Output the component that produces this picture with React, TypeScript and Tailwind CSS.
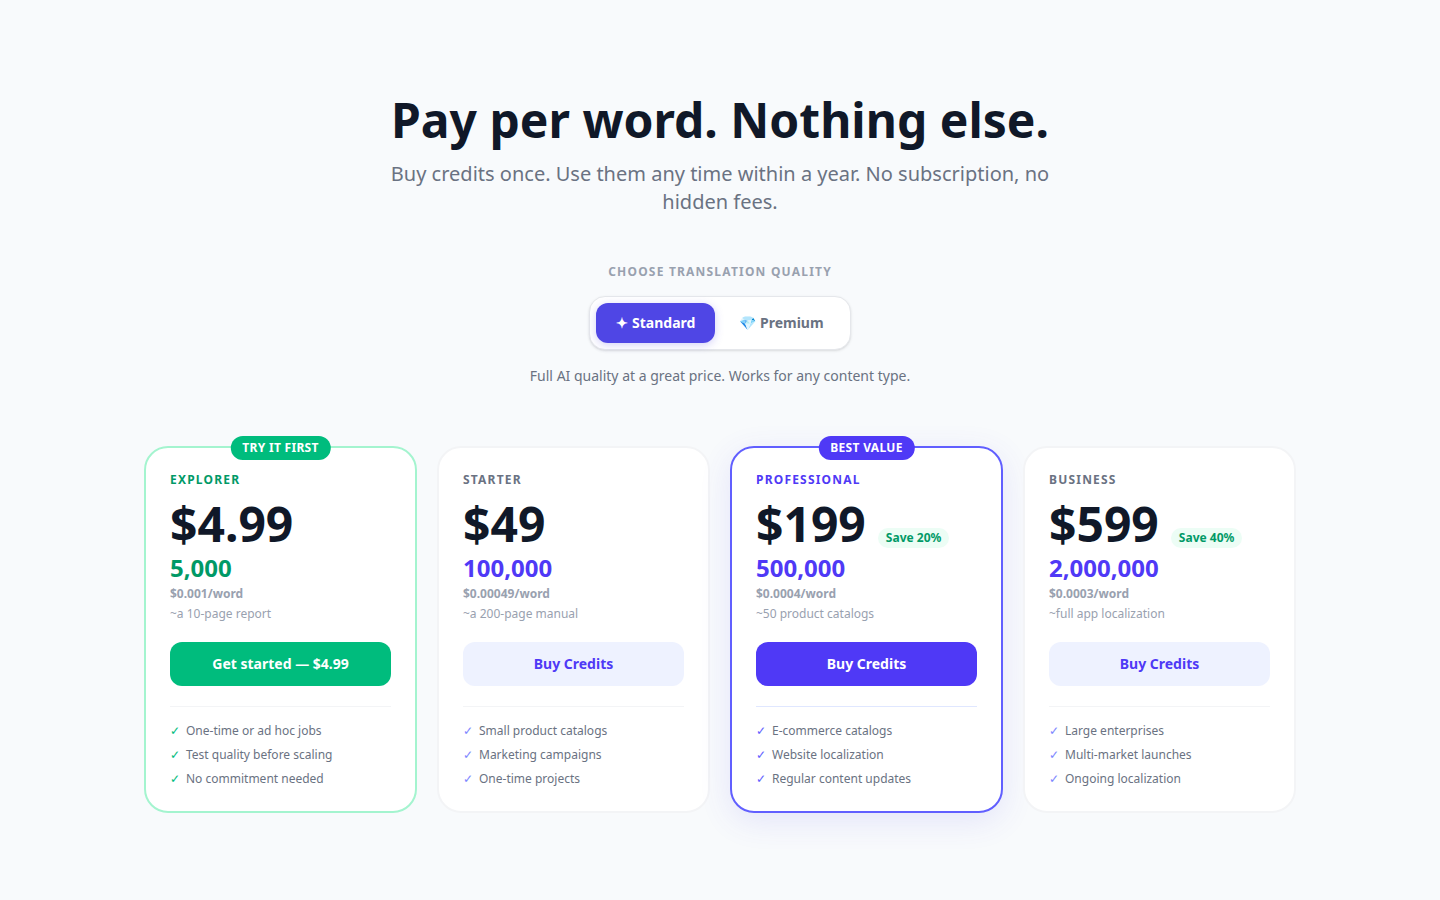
import { useState } from 'react';
import clsx from 'clsx';

type Quality = 'standard' | 'premium';

interface Plan {
  name: string;
  price: string;
  words: string;
  perWord: string;
  example: string;
  cta: string;
  features: string[];
  badge?: string;
  save?: string;
  theme: keyof typeof themes;
}

const themes = {
  green: {
    card: 'border-emerald-200',
    badge: 'bg-emerald-500',
    name: 'text-emerald-600',
    words: 'text-emerald-600',
    button: 'bg-emerald-500 text-white hover:bg-emerald-600',
    divider: 'border-gray-100',
    check: 'text-emerald-500',
  },
  plain: {
    card: 'border-gray-100',
    badge: 'bg-gray-500',
    name: 'text-gray-500',
    words: 'text-indigo-600',
    button: 'bg-indigo-50 text-indigo-600 hover:bg-indigo-100',
    divider: 'border-gray-100',
    check: 'text-indigo-400',
  },
  featured: {
    card: 'border-indigo-500 shadow-[0_8px_32px_rgba(79,70,229,0.12)]',
    badge: 'bg-indigo-600',
    name: 'text-indigo-600',
    words: 'text-indigo-600',
    button: 'bg-indigo-600 text-white hover:bg-indigo-700',
    divider: 'border-indigo-100',
    check: 'text-indigo-500',
  },
};

const plans: Plan[] = [
  {
    name: 'Explorer',
    price: '$4.99',
    words: '5,000',
    perWord: '$0.001/word',
    example: '~a 10-page report',
    cta: 'Get started — $4.99',
    features: ['One-time or ad hoc jobs', 'Test quality before scaling', 'No commitment needed'],
    badge: 'Try it first',
    theme: 'green',
  },
  {
    name: 'Starter',
    price: '$49',
    words: '100,000',
    perWord: '$0.00049/word',
    example: '~a 200-page manual',
    cta: 'Buy Credits',
    features: ['Small product catalogs', 'Marketing campaigns', 'One-time projects'],
    theme: 'plain',
  },
  {
    name: 'Professional',
    price: '$199',
    words: '500,000',
    perWord: '$0.0004/word',
    example: '~50 product catalogs',
    cta: 'Buy Credits',
    features: ['E-commerce catalogs', 'Website localization', 'Regular content updates'],
    badge: 'Best value',
    save: 'Save 20%',
    theme: 'featured',
  },
  {
    name: 'Business',
    price: '$599',
    words: '2,000,000',
    perWord: '$0.0003/word',
    example: '~full app localization',
    cta: 'Buy Credits',
    features: ['Large enterprises', 'Multi-market launches', 'Ongoing localization'],
    save: 'Save 40%',
    theme: 'plain',
  },
];

const qualities: { id: Quality; label: string }[] = [
  { id: 'standard', label: '✦ Standard' },
  { id: 'premium', label: '💎 Premium' },
];

function PlanCard({ plan }: { plan: Plan }) {
  const theme = themes[plan.theme];

  return (
    <article className={clsx('relative flex flex-col rounded-3xl border-2 bg-white p-6', theme.card)}>
      {plan.badge && (
        <span
          className={clsx(
            'absolute -top-3 left-1/2 -translate-x-1/2 rounded-full px-3 py-1 text-xs font-bold tracking-wide whitespace-nowrap text-white uppercase',
            theme.badge,
          )}
        >
          {plan.badge}
        </span>
      )}
      <h2 className={clsx('mb-3 text-xs font-bold tracking-widest uppercase', theme.name)}>{plan.name}</h2>
      <div className="mb-1 flex items-end gap-3">
        <span className="text-5xl leading-none font-bold text-gray-900">{plan.price}</span>
        {plan.save && (
          <span className="rounded-full bg-emerald-50 px-2 py-0.5 text-xs font-bold text-emerald-600">
            {plan.save}
          </span>
        )}
      </div>
      <p className={clsx('text-2xl font-bold', theme.words)}>{plan.words}</p>
      <p className="mt-0.5 text-xs font-bold text-gray-400">{plan.perWord}</p>
      <p className="mt-1 mb-5 text-xs text-gray-400">{plan.example}</p>
      <button
        type="button"
        className={clsx('w-full cursor-pointer rounded-xl py-3 text-sm font-bold', theme.button)}
      >
        {plan.cta}
      </button>
      <ul className={clsx('mt-5 flex flex-col gap-2 border-t pt-4 text-xs text-gray-500', theme.divider)}>
        {plan.features.map((feature) => (
          <li key={feature} className="flex gap-1.5">
            <span className={theme.check}>✓</span>
            {feature}
          </li>
        ))}
      </ul>
    </article>
  );
}

export default function App() {
  const [quality, setQuality] = useState<Quality>('standard');

  return (
    <main className="min-h-screen bg-slate-50 px-6 pt-24 pb-20 font-['Noto_Sans',sans-serif]">
      <header className="mx-auto mb-12 max-w-2xl text-center">
        <h1 className="mb-4 text-5xl leading-none font-bold text-gray-900">Pay per word. Nothing else.</h1>
        <p className="text-xl text-gray-500">
          Buy credits once. Use them any time within a year. No subscription, no hidden fees.
        </p>
      </header>

      <section className="mb-15 flex flex-col items-center">
        <p id="quality-label" className="mb-4 text-xs font-bold tracking-widest text-gray-400 uppercase">
          Choose translation quality
        </p>
        <div
          role="group"
          aria-labelledby="quality-label"
          className="flex gap-1 rounded-2xl border border-gray-200 bg-white p-1.5 shadow-sm"
        >
          {qualities.map((q) => (
            <button
              key={q.id}
              type="button"
              aria-pressed={quality === q.id}
              onClick={() => setQuality(q.id)}
              className={clsx(
                'cursor-pointer rounded-xl px-5 py-2.5 text-sm font-bold',
                quality === q.id
                  ? 'bg-[#4f46e5] text-white shadow-[0_2px_8px_rgba(79,70,229,0.25)]'
                  : 'text-gray-500',
              )}
            >
              {q.label}
            </button>
          ))}
        </div>
        <p className="mt-4 text-sm text-gray-500">Full AI quality at a great price. Works for any content type.</p>
      </section>

      <section className="mx-auto grid max-w-6xl gap-5 sm:grid-cols-2 lg:grid-cols-4">
        {plans.map((plan) => (
          <PlanCard key={plan.name} plan={plan} />
        ))}
      </section>
    </main>
  );
}
